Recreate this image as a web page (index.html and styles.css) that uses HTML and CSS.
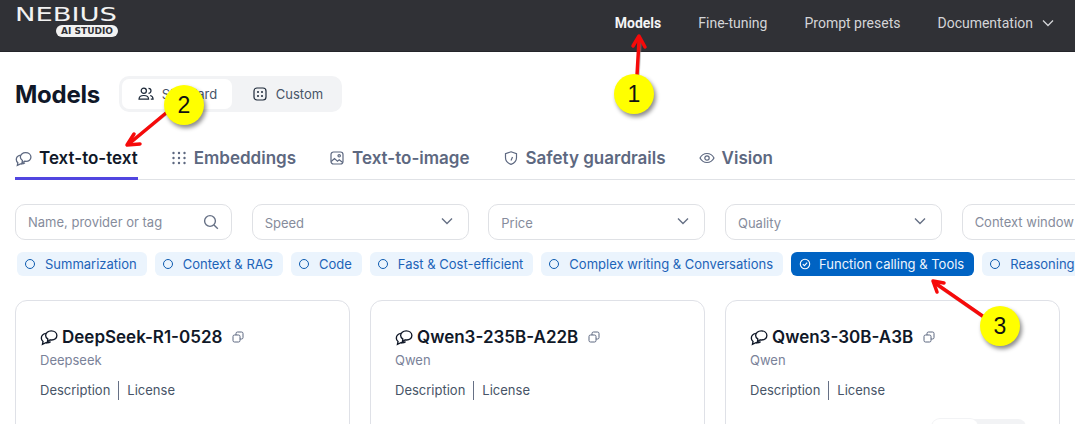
FILE: index.html
```html
<!DOCTYPE html>
<html>
<head>
    <meta charset="utf-8"/>
    <title>Models</title>
    <link rel="stylesheet" href="styles.css">
</head>
<body>
    <header class="topbar">
        <div class="logo">
            <span class="logo-name">NEBIUS</span>
            <span class="logo-tag">AI STUDIO</span>
        </div>
        <nav class="topnav">
            <a class="active">Models</a>
            <a>Fine-tuning</a>
            <a>Prompt presets</a>
            <a>Documentation
                <svg class="nav-chevron" width="14" height="14" viewBox="0 0 14 14"><path d="M2 4.500l5 5 5-5"/></svg>
            </a>
        </nav>
    </header>
    <main>
        <div class="title-row">
            <h1>Models</h1>
            <div class="segment">
                <div class="segment-item on">
                    <svg class="icon" width="16" height="16" viewBox="0 0 16 16"><circle cx="5.800" cy="4.800" r="2.600"/><path d="M1 13.200c0-2.400 2-3.700 4.800-3.700s4.800 1.300 4.800 3.700z"/><path d="M10.500 2.300a2.500 2.500 0 0 1 0 5M12.200 9.500c1.700.4 2.900 1.600 2.900 3.700h-2.300"/></svg>
                    Standard
                </div>
                <div class="segment-item">
                    <svg class="icon" width="16" height="16" viewBox="0 0 16 16"><rect x="2" y="2" width="12" height="12" rx="3"/><g class="dots"><circle cx="6" cy="6" r="1"/><circle cx="10" cy="6" r="1"/><circle cx="6" cy="10" r="1"/><circle cx="10" cy="10" r="1"/></g></svg>
                    Custom
                </div>
            </div>
        </div>
        <div class="tabs">
            <div class="tab on">
                <svg class="icon" width="17" height="17" viewBox="0 0 16 16"><path d="M10 2.500c2.900 0 5 1.800 5 4.200 0 2.300-2 4-4.600 4-.5 0-1 0-1.400-.2l-2.500 2 .5-2.600C5.900 9.100 5 8 5 6.700c0-2.400 2.100-4.200 5-4.200z"/><path d="M5.200 4.800C2.900 5.300 1.200 7 1.200 9c0 1.200.6 2.300 1.500 3l-.5 2.500 3-1.500c1.500.3 3 0 4.200-.9"/></svg>
                Text-to-text
            </div>
            <div class="tab">
                <svg class="icon" width="16" height="16" viewBox="0 0 16 16"><g class="dots"><circle cx="2.500" cy="3" r="1.200"/><circle cx="8" cy="3" r="1.200"/><circle cx="13.500" cy="3" r="1.200"/><circle cx="2.500" cy="8" r="1.200"/><circle cx="8" cy="8" r="1.200"/><circle cx="13.500" cy="8" r="1.200"/><circle cx="2.500" cy="13" r="1.200"/><circle cx="8" cy="13" r="1.200"/><circle cx="13.500" cy="13" r="1.200"/></g></svg>
                Embeddings
            </div>
            <div class="tab">
                <svg class="icon" width="16" height="16" viewBox="0 0 16 16"><rect x="2" y="2" width="12" height="12" rx="2.500"/><circle cx="10.200" cy="5.800" r="1.200"/><path d="M2.200 11.500l3.300-3 3 2.600 1.700-1.400 3.500 2.800"/></svg>
                Text-to-image
            </div>
            <div class="tab">
                <svg class="icon" width="16" height="16" viewBox="0 0 16 16"><path d="M8 1.800l5.500 1.900v4.100c0 3.300-2.300 5.400-5.500 6.600-3.200-1.200-5.500-3.300-5.500-6.600V3.700z"/><path d="M8 10.500l1.500-3.500"/></svg>
                Safety guardrails
            </div>
            <div class="tab">
                <svg class="icon" width="16" height="16" viewBox="0 0 16 16"><path d="M1 8c1.600-3 4-4.500 7-4.500S13.400 5 15 8c-1.600 3-4 4.500-7 4.500S2.600 11 1 8z"/><circle cx="8" cy="8" r="2.200"/></svg>
                Vision
            </div>
        </div>
        <div class="filters">
            <div class="filter search">Name, provider or tag
                <svg class="search-icon" width="16" height="16" viewBox="0 0 16 16"><circle cx="7" cy="7" r="5.400"/><path d="M11 11l3.800 3.800"/></svg>
            </div>
            <div class="filter">Speed
                <svg class="chevron" width="14" height="14" viewBox="0 0 14 14"><path d="M2 4.500l5 5 5-5"/></svg>
            </div>
            <div class="filter">Price
                <svg class="chevron" width="14" height="14" viewBox="0 0 14 14"><path d="M2 4.500l5 5 5-5"/></svg>
            </div>
            <div class="filter">Quality
                <svg class="chevron" width="14" height="14" viewBox="0 0 14 14"><path d="M2 4.500l5 5 5-5"/></svg>
            </div>
            <div class="filter search">Context window</div>
        </div>
        <div class="chips">
            <div class="chip"><span class="ring"></span>Summarization</div>
            <div class="chip"><span class="ring"></span>Context &amp; RAG</div>
            <div class="chip"><span class="ring"></span>Code</div>
            <div class="chip"><span class="ring"></span>Fast &amp; Cost-efficient</div>
            <div class="chip"><span class="ring"></span>Complex writing &amp; Conversations</div>
            <div class="chip on">
                <svg class="chip-check" width="12" height="12" viewBox="0 0 12 12"><circle cx="6" cy="6" r="4.700"/><path d="M3.800 6.200l1.600 1.500 2.800-3"/></svg>
                Function calling &amp; Tools
            </div>
            <div class="chip"><span class="ring"></span>Reasoning</div>
        </div>
        <div class="cards">
            <section class="card">
                <h2>
                    <svg class="bubble" width="18" height="18" viewBox="0 0 16 16"><path d="M10 2.500c2.900 0 5 1.800 5 4.200 0 2.300-2 4-4.600 4-.5 0-1 0-1.400-.2l-2.500 2 .5-2.600C5.900 9.100 5 8 5 6.700c0-2.400 2.100-4.200 5-4.200z"/><path d="M5.200 4.800C2.900 5.300 1.200 7 1.200 9c0 1.200.6 2.300 1.500 3l-.5 2.500 3-1.500c1.500.3 3 0 4.200-.9"/></svg>
                    DeepSeek-R1-0528
                    <svg class="copy" width="12" height="12" viewBox="0 0 12 12"><rect x="1" y="4" width="7" height="7" rx="1.500"/><path d="M4 4V2.500A1.500 1.500 0 0 1 5.500 1h4A1.500 1.500 0 0 1 11 2.500v4A1.500 1.500 0 0 1 9.500 8H8"/></svg>
                </h2>
                <p class="provider">Deepseek</p>
                <p class="links"><span>Description</span><span>License</span></p>
            </section>
            <section class="card">
                <h2>
                    <svg class="bubble" width="18" height="18" viewBox="0 0 16 16"><path d="M10 2.500c2.900 0 5 1.800 5 4.200 0 2.300-2 4-4.600 4-.5 0-1 0-1.400-.2l-2.500 2 .5-2.600C5.900 9.100 5 8 5 6.700c0-2.400 2.100-4.200 5-4.200z"/><path d="M5.200 4.800C2.900 5.300 1.200 7 1.200 9c0 1.200.6 2.300 1.500 3l-.5 2.500 3-1.500c1.500.3 3 0 4.200-.9"/></svg>
                    Qwen3-235B-A22B
                    <svg class="copy" width="12" height="12" viewBox="0 0 12 12"><rect x="1" y="4" width="7" height="7" rx="1.500"/><path d="M4 4V2.500A1.500 1.500 0 0 1 5.500 1h4A1.500 1.500 0 0 1 11 2.500v4A1.500 1.500 0 0 1 9.500 8H8"/></svg>
                </h2>
                <p class="provider">Qwen</p>
                <p class="links"><span>Description</span><span>License</span></p>
            </section>
            <section class="card">
                <h2>
                    <svg class="bubble" width="18" height="18" viewBox="0 0 16 16"><path d="M10 2.500c2.900 0 5 1.800 5 4.200 0 2.300-2 4-4.600 4-.5 0-1 0-1.400-.2l-2.500 2 .5-2.600C5.900 9.100 5 8 5 6.700c0-2.400 2.100-4.200 5-4.200z"/><path d="M5.200 4.800C2.900 5.300 1.200 7 1.200 9c0 1.200.6 2.300 1.500 3l-.5 2.500 3-1.500c1.500.3 3 0 4.200-.9"/></svg>
                    Qwen3-30B-A3B
                    <svg class="copy" width="12" height="12" viewBox="0 0 12 12"><rect x="1" y="4" width="7" height="7" rx="1.500"/><path d="M4 4V2.500A1.500 1.500 0 0 1 5.500 1h4A1.500 1.500 0 0 1 11 2.500v4A1.500 1.500 0 0 1 9.500 8H8"/></svg>
                </h2>
                <p class="provider">Qwen</p>
                <p class="links"><span>Description</span><span>License</span></p>
                <div class="mini-toggle"><span></span></div>
            </section>
        </div>
    </main>

    <!-- callouts pasted on top of the screenshot -->
    <svg class="arrows" width="1075" height="424" viewBox="0 0 1075 424">
        <g class="arrow-shadow">
            <path d="M638 75L640 42"/><path d="M167 113L128 144"/><path d="M985 318L936 284"/>
        </g>
        <g class="arrow">
            <path d="M637 75L639 41"/><path d="M633 46L639 36l6 11"/>
            <path d="M166 113L130 143"/><path d="M134 134l-7 11 13 -1"/>
            <path d="M984 317L935 283"/><path d="M944 283l-11-2 4 11"/>
        </g>
    </svg>
    <div class="badge badge-1">1</div>
    <div class="badge badge-2">2</div>
    <div class="badge badge-3">3</div>
</body>
</html>
```

FILE: styles.css
```css
html, body {
    margin: 0;
    width: 1075px;
    height: 424px;
    overflow: hidden;
    background: #fff;
}
body {
    position: relative;
    font-family: "Inter", "Liberation Sans", sans-serif;
    color: #101828;
}
svg {
    flex: none;
}

.topbar {
    height: 51px;
    border-bottom: 1px solid #24252a;
    background: #303136;
    display: flex;
    align-items: flex-start;
    justify-content: space-between;
}
.logo {
    width: 103px;
    margin-left: 15px;
    padding-top: 4px;
    display: flex;
    flex-direction: column;
    align-items: flex-end;
    color: #f2f2f2;
}
.logo-name {
    font-family: "DejaVu Sans", sans-serif;
    font-size: 19px;
    line-height: 20px;
    width: 103px;
    white-space: nowrap;
    transform: scaleX(1.44);
    transform-origin: left center;
}
.logo-tag {
    margin-top: 1px;
    width: 62px;
    height: 12px;
    line-height: 12px;
    text-align: center;
    border-radius: 6px;
    background: #f2f2f2;
    color: #303136;
    font-family: "DejaVu Sans", sans-serif;
    font-size: 9px;
    font-weight: bold;
    white-space: nowrap;
}
.topnav {
    display: flex;
    gap: 37px;
    margin-right: 20px;
    padding-top: 14px;
    font-family: "Roboto", sans-serif;
    font-size: 14px;
    line-height: 18px;
    color: #d4d5d8;
}
.topnav a {
    display: flex;
    align-items: center;
    white-space: nowrap;
}
.topnav a.active {
    color: #f4f4f5;
    font-weight: bold;
}
.nav-chevron {
    margin-left: 8px;
    fill: none;
    stroke: #d4d5d8;
    stroke-width: 1.300;
}

main {
    padding: 24px 0 0 15px;
    width: 1200px;
}
.title-row {
    display: flex;
    align-items: center;
    gap: 19.500px;
    height: 36px;
}
h1 {
    margin: 0;
    font-size: 24px;
    font-weight: 700;
    letter-spacing: -.25px;
}
.segment {
    display: flex;
    width: 217px;
    height: 30px;
    padding: 3px;
    border-radius: 10px;
    background: #f2f3f5;
}
.segment-item {
    flex: 0 0 110px;
    display: flex;
    align-items: center;
    justify-content: center;
    gap: 8px;
    border-radius: 7px;
    font-size: 13px;
    color: #475467;
}
.segment-item.on {
    background: #fff;
}
.icon {
    fill: none;
    stroke: #5d6880;
    stroke-width: 1.200;
}
.segment .icon {
    stroke: #1d2939;
}
.icon .dots {
    fill: #5d6880;
    stroke: none;
}
.segment .icon .dots {
    fill: #1d2939;
}

.tabs {
    display: flex;
    gap: 33px;
    width: 1060px;
    height: 44px;
    margin-top: 24px;
    box-sizing: border-box;
    border-bottom: 1px solid #e0e2e6;
}
.tab {
    display: flex;
    align-items: center;
    gap: 7px;
    height: 44px;
    box-sizing: border-box;
    padding: 4px 0 1px;
    border-bottom: 3px solid transparent;
    font-size: 17px;
    font-weight: 600;
    color: #5d6880;
    white-space: nowrap;
}
.tab.on {
    color: #101828;
    border-bottom-color: #5146e0;
}

.filters {
    display: flex;
    gap: 19.670px;
    margin-top: 24px;
}
.filter {
    flex: 0 0 217px;
    height: 36px;
    box-sizing: border-box;
    padding: 2px 14px 0 12px;
    border: 1px solid #dfe1e5;
    border-radius: 10px;
    display: flex;
    align-items: center;
    justify-content: space-between;
    font-size: 13px;
    color: #868c9c;
}
.filter.search {
    padding: 0 12px;
    white-space: nowrap;
}
.search-icon {
    fill: none;
    stroke: #667085;
    stroke-width: 1.400;
}
.chevron {
    fill: none;
    stroke: #667085;
    stroke-width: 1.400;
    margin-top: -4px;
}

.chips {
    display: flex;
    gap: 8px;
    margin-top: 12px;
    padding-left: 2px;
}
.chip {
    height: 24px;
    padding: 0 10px 0 8px;
    display: flex;
    align-items: center;
    gap: 10px;
    border-radius: 6px;
    background: #ebf4fd;
    color: #1c63b8;
    font-size: 13px;
    white-space: nowrap;
}
.chip.on {
    gap: 8px;
    background: #0063c3;
    color: #eef5fd;
}
.ring {
    flex: none;
    width: 8px;
    height: 8px;
    border: 1.500px solid #0d5bb0;
    border-radius: 50%;
}
.chip-check {
    fill: none;
    stroke: #fff;
    stroke-width: 1.100;
}

.cards {
    display: flex;
    gap: 20px;
    margin-top: 24px;
}
.card {
    position: relative;
    flex: 0 0 335px;
    height: 200px;
    box-sizing: border-box;
    padding: 25px 24px;
    border: 1px solid #dfe1e7;
    border-radius: 12px;
}
h2 {
    margin: 0;
    display: flex;
    align-items: center;
    gap: 4px;
    font-size: 17px;
    line-height: 22px;
    font-weight: 600;
    white-space: nowrap;
}
.bubble {
    fill: none;
    stroke: #101828;
    stroke-width: 1.200;
}
.copy {
    margin-left: 6px;
    fill: none;
    stroke: #5d6880;
}
.provider {
    margin: 2px 0 0;
    font-size: 13px;
    line-height: 20px;
    color: #7a8299;
}
.links {
    margin: 11px 0 0;
    display: flex;
    font-size: 13px;
    line-height: 19px;
    color: #475467;
}
.links span + span {
    margin-left: 8px;
    padding-left: 8px;
    border-left: 1px solid #667085;
}
.mini-toggle {
    position: absolute;
    top: 118px;
    right: 33px;
    width: 94px;
    height: 30px;
    border-radius: 8px;
    background: #f2f3f5;
}
.mini-toggle span {
    display: block;
    width: 46px;
    height: 30px;
    border-radius: 8px;
    background: #fff;
    box-shadow: 0 0 0 1px #f2f3f5;
}

/* annotations */
.arrows {
    position: absolute;
    left: 0;
    top: 0;
    fill: none;
    stroke-linecap: round;
    stroke-linejoin: round;
}
.arrow {
    stroke: #f60a0a;
    stroke-width: 3.500;
}
.arrow-shadow {
    stroke: #9a9a9a;
    stroke-width: 3.500;
    opacity: .5;
}
.badge {
    position: absolute;
    width: 40px;
    height: 40px;
    border-radius: 50%;
    background: #ffff00;
    box-shadow: 2px 3px 4px rgba(0, 0, 0, .45);
    display: flex;
    align-items: center;
    justify-content: center;
    font-family: "Liberation Sans", sans-serif;
    font-size: 23px;
    color: #111;
}
.badge-1 {
    left: 614px;
    top: 74px;
}
.badge-2 {
    left: 164px;
    top: 85px;
}
.badge-3 {
    left: 980px;
    top: 306px;
}
```
